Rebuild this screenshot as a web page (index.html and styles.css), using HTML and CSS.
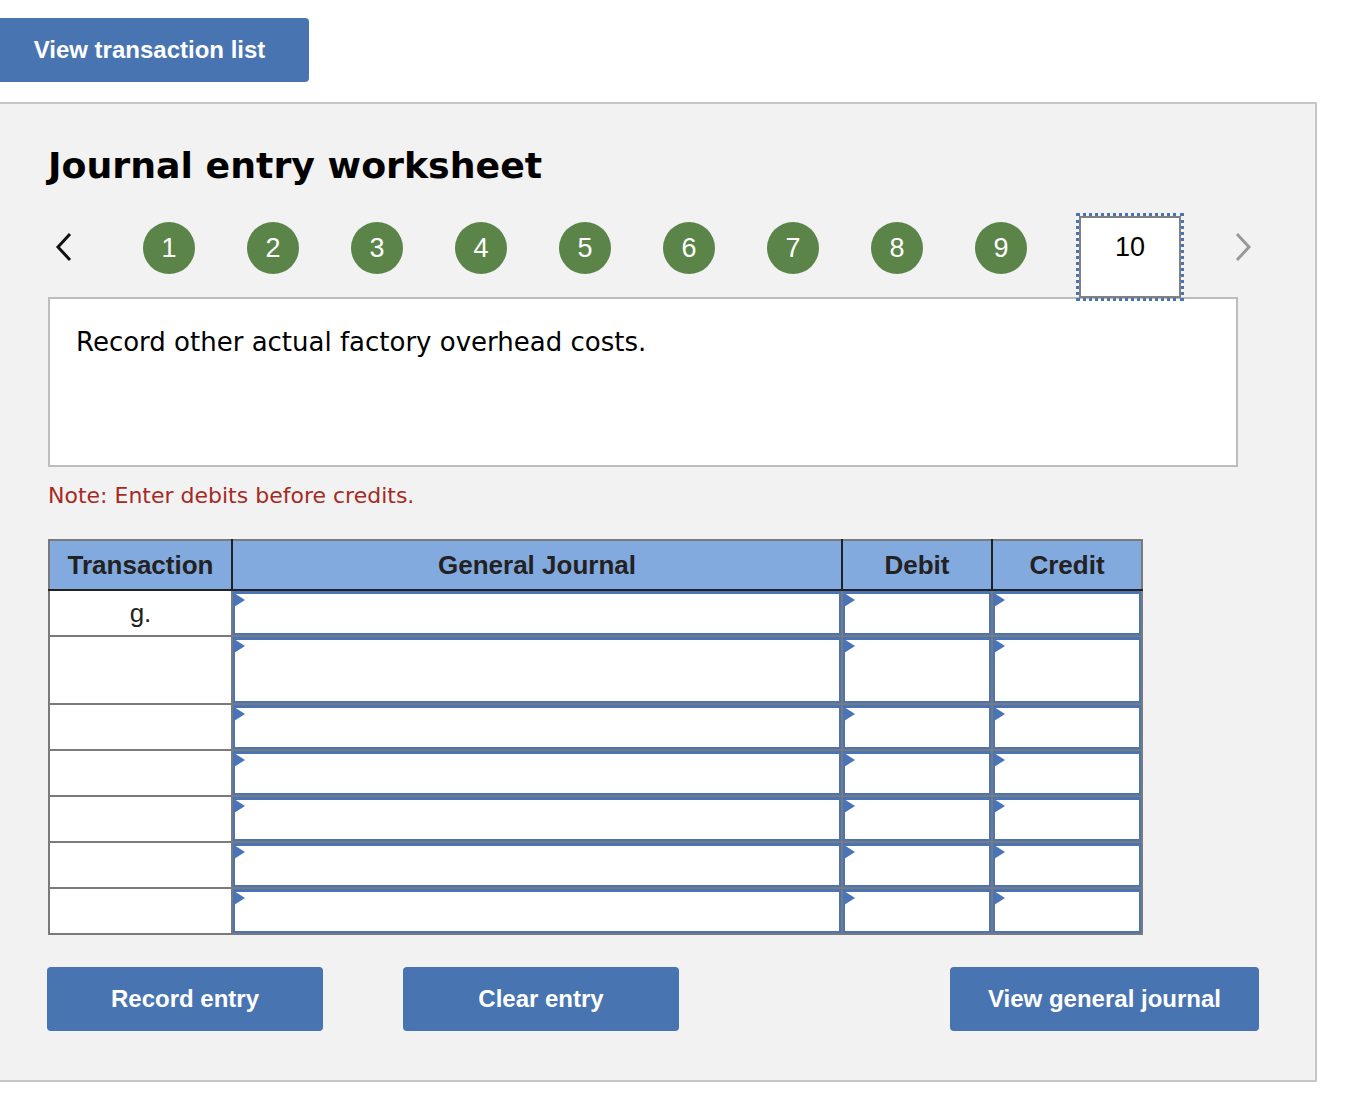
FILE: index.html
```html
<!DOCTYPE html>
<html>
<head>
<meta charset="utf-8">
<title>Journal entry worksheet</title>
<link rel="stylesheet" href="styles.css">
</head>
<body>
<div class="top">
  <button class="btn btn-top">View transaction list</button>
</div>
<div class="panel">
  <h1 class="title">Journal entry worksheet</h1>
  <div class="nav">
    <span class="chev prev"><svg width="20" height="30" viewBox="0 0 20 30"><polyline points="16,2 4,15 16,28" fill="none" stroke="#111" stroke-width="3"/></svg></span>
    <span class="step first">1</span>
    <span class="step">2</span>
    <span class="step">3</span>
    <span class="step">4</span>
    <span class="step">5</span>
    <span class="step">6</span>
    <span class="step">7</span>
    <span class="step">8</span>
    <span class="step">9</span>
    <span class="current">10</span>
    <span class="chev next"><svg width="20" height="30" viewBox="0 0 20 30"><polyline points="4,2 16,15 4,28" fill="none" stroke="#999" stroke-width="3"/></svg></span>
  </div>
  <div class="desc">Record other actual factory overhead costs.</div>
  <p class="note">Note: Enter debits before credits.</p>
  <table class="journal">
    <colgroup>
      <col class="c-tr"><col class="c-gj"><col class="c-amt"><col class="c-amt">
    </colgroup>
    <thead>
      <tr><th>Transaction</th><th>General Journal</th><th>Debit</th><th>Credit</th></tr>
    </thead>
    <tbody>
      <tr><td class="tr">g.</td><td class="in"><div class="box"></div></td><td class="in"><div class="box"></div></td><td class="in"><div class="box"></div></td></tr>
      <tr class="tall"><td class="tr"></td><td class="in"><div class="box"></div></td><td class="in"><div class="box"></div></td><td class="in"><div class="box"></div></td></tr>
      <tr><td class="tr"></td><td class="in"><div class="box"></div></td><td class="in"><div class="box"></div></td><td class="in"><div class="box"></div></td></tr>
      <tr><td class="tr"></td><td class="in"><div class="box"></div></td><td class="in"><div class="box"></div></td><td class="in"><div class="box"></div></td></tr>
      <tr><td class="tr"></td><td class="in"><div class="box"></div></td><td class="in"><div class="box"></div></td><td class="in"><div class="box"></div></td></tr>
      <tr><td class="tr"></td><td class="in"><div class="box"></div></td><td class="in"><div class="box"></div></td><td class="in"><div class="box"></div></td></tr>
      <tr><td class="tr"></td><td class="in"><div class="box"></div></td><td class="in"><div class="box"></div></td><td class="in"><div class="box"></div></td></tr>
    </tbody>
  </table>
  <div class="actions">
    <button class="btn btn-act">Record entry</button>
    <button class="btn btn-act">Clear entry</button>
    <button class="btn btn-act btn-wide">View general journal</button>
  </div>
</div>
</body>
</html>
```
FILE: styles.css
```css
html, body {
  margin: 0;
  padding: 0;
  background: #fff;
}
body {
  font-family: "Liberation Sans", Arial, sans-serif;
  color: #111;
}
.top {
  padding-top: 18px;
  height: 64px;
}
.btn {
  background: #4874b2;
  color: #fff;
  border: none;
  border-radius: 4px;
  font-family: "Liberation Sans", Arial, sans-serif;
  font-weight: bold;
  font-size: 24px;
  height: 64px;
  padding: 0;
  cursor: pointer;
}
.btn-top {
  width: 309px;
  border-radius: 0 4px 4px 0;
  padding-right: 10px;
}
.panel {
  margin-top: 20px;
  width: 1317px;
  background: #f2f2f2;
  border-top: 2px solid #c6c6c6;
  border-right: 2px solid #c6c6c6;
  border-bottom: 2px solid #c6c6c6;
  padding: 0 0 49px 48px;
  box-sizing: border-box;
}
.title {
  margin: 0;
  padding-top: 42px;
  font-family: "DejaVu Sans", Verdana, sans-serif;
  font-weight: bold;
  font-size: 36.3px;
  line-height: 40px;
  color: #000;
}
.nav {
  display: flex;
  align-items: flex-start;
  height: 84px;
  margin-top: 27px;
}
.chev {
  display: flex;
  width: 20px;
  height: 30px;
  margin-top: 19px;
}
.prev {
  margin-left: 6px;
}
.step {
  width: 52px;
  height: 52px;
  margin-top: 9px;
  border-radius: 50%;
  background: #5b8449;
  color: #fff;
  font-size: 27px;
  display: flex;
  align-items: center;
  justify-content: center;
  margin-left: 52px;
}
.step.first {
  margin-left: 69px;
}
.current {
  width: 102px;
  height: 82px;
  box-sizing: border-box;
  margin-top: 3px;
  margin-left: 52px;
  background: #fff;
  border: 2px solid #808080;
  outline: 3px dotted #4a74b8;
  outline-offset: 0;
  font-size: 27px;
  color: #000;
  display: flex;
  justify-content: center;
  padding-top: 14px;
}
.next {
  margin-left: 52px;
}
.desc {
  width: 1190px;
  height: 170px;
  box-sizing: border-box;
  background: #fff;
  border: 2px solid #bdbdbd;
  padding: 28px 0 0 26px;
  font-family: "DejaVu Sans", Verdana, sans-serif;
  font-size: 26px;
  line-height: 30px;
  color: #000;
}
.note {
  margin: 16px 0 0 0;
  font-family: "DejaVu Sans", Verdana, sans-serif;
  font-size: 22px;
  line-height: 26px;
  color: #a52a25;
}
.journal {
  margin-top: 30px;
  border-collapse: collapse;
  table-layout: fixed;
  width: 1094px;
  background: #fff;
  border: 2px solid #7a7a7a;
}
.c-tr { width: 183px; }
.c-gj { width: 610px; }
.c-amt { width: 150px; }
.journal th {
  background: #82aadf;
  color: #222;
  font-size: 26px;
  font-weight: bold;
  height: 48px;
  padding: 0;
  border: 2px solid #222;
  border-top-color: #7a7a7a;
}
.journal th:first-child { border-left-color: #7a7a7a; }
.journal th:last-child { border-right-color: #7a7a7a; }
.journal td {
  border: 2px solid #7a7a7a;
  padding: 0;
  height: 44px;
}
.journal tr.tall td { height: 66px; }
.journal td.tr {
  text-align: center;
  vertical-align: top;
  font-size: 26px;
  color: #222;
  line-height: 44px;
}
.box {
  position: relative;
  height: 44px;
  box-sizing: border-box;
  border: 2px solid #4a74b8;
  border-top-width: 3px;
}
.tall .box { height: 66px; }
.box::before {
  content: "";
  position: absolute;
  left: -1px;
  top: -1px;
  border-left: 11px solid #4a74b8;
  border-top: 7px solid transparent;
  border-bottom: 7px solid transparent;
}
.actions {
  display: flex;
  width: 1212px;
  margin-top: 32px;
  margin-left: -1px;
}
.btn-act {
  width: 276px;
  margin-right: 80px;
}
.btn-wide {
  width: 309px;
  margin-left: auto;
  margin-right: 0;
}
```
